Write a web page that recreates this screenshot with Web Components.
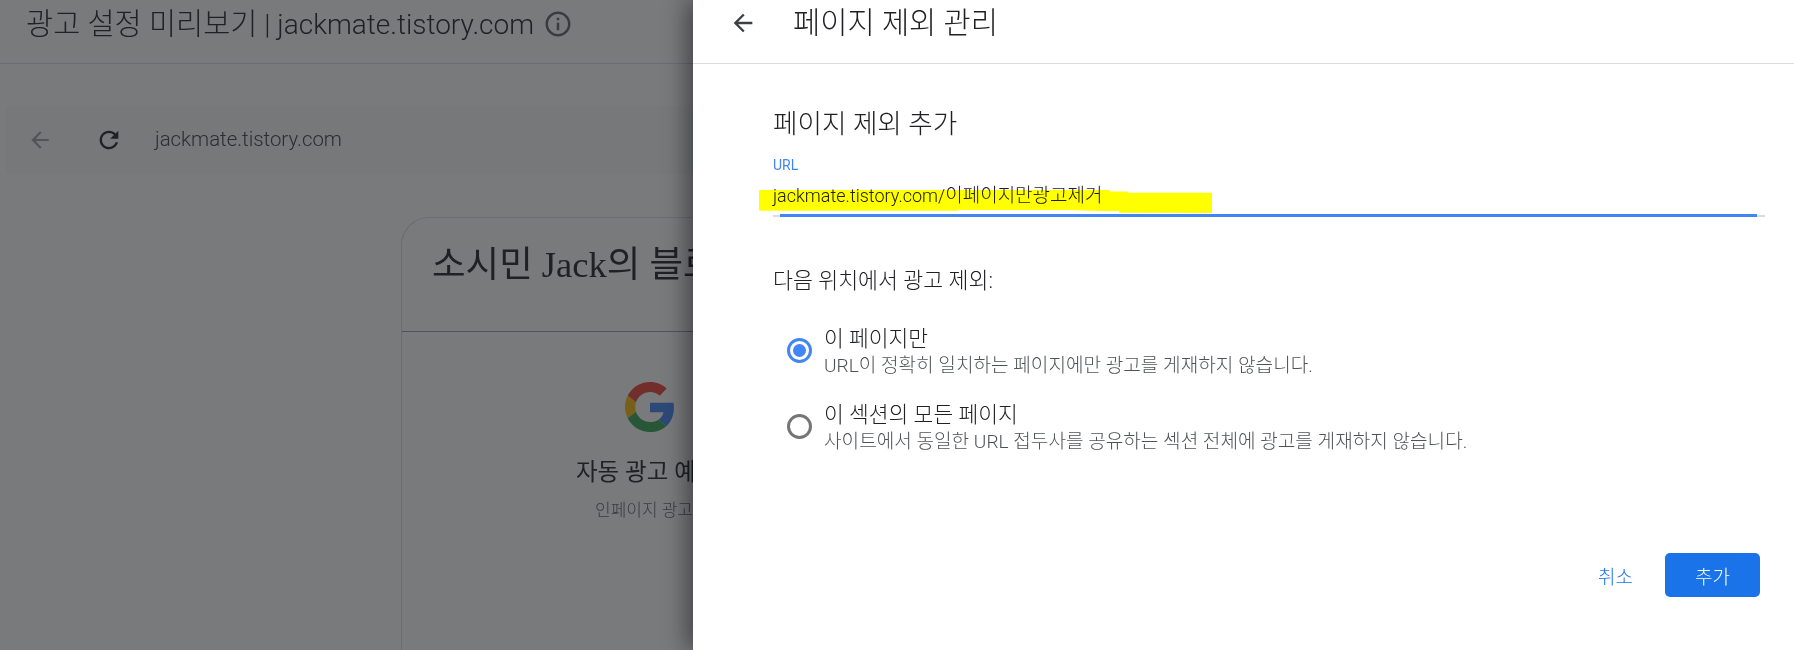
<!DOCTYPE html>
<html lang="ko">
<head>
<meta charset="utf-8">
<title>페이지 제외 관리</title>
<style>
  html, body { margin: 0; height: 100%; overflow: hidden; background: #fff; }
  body {
    font-family: Roboto, "Noto Sans CJK KR", sans-serif;
    color: #202124;
  }
  ads-layout { height: 650px; }
</style>
</head>
<body>
<ads-layout>
  <preview-pane slot="preview" site="jackmate.tistory.com" blog="소시민 Jack의 블로그"></preview-pane>
  <exclusion-panel slot="panel"></exclusion-panel>
</ads-layout>

<script>
const ICONS = {
  back: "M20 11H7.83l5.59-5.59L12 4l-8 8 8 8 1.41-1.41L7.83 13H20v-2z",
  refresh: "M17.65 6.35C16.2 4.9 14.21 4 12 4c-4.42 0-7.99 3.58-7.99 8s3.57 8 7.99 8c3.73 0 6.84-2.55 7.73-6h-2.08c-.82 2.33-3.04 4-5.65 4-3.31 0-6-2.69-6-6s2.69-6 6-6c1.66 0 3.14.69 4.22 1.78L13 11h7V4l-2.35 2.35z",
  info: "M11 7h2v2h-2zm0 4h2v6h-2zm1-9C6.48 2 2 6.48 2 12s4.48 10 10 10 10-4.48 10-10S17.52 2 12 2zm0 18c-4.41 0-8-3.59-8-8s3.59-8 8-8 8 3.59 8 8-3.59 8-8 8z"
};

class MatIcon extends HTMLElement {
  connectedCallback() {
    const size = this.getAttribute("size") || 24;
    const root = this.shadowRoot || this.attachShadow({ mode: "open" });
    root.innerHTML = `
      <style>
        :host { display: inline-flex; flex: none; color: inherit; }
        svg { display: block; fill: currentColor; }
      </style>
      <svg width="${size}" height="${size}" viewBox="0 0 24 24"><path d="${ICONS[this.getAttribute("name")]}"/></svg>`;
  }
}
customElements.define("mat-icon", MatIcon);

class AdsLayout extends HTMLElement {
  constructor() {
    super();
    this.attachShadow({ mode: "open" }).innerHTML = `
      <style>
        :host { display: flex; width: 100%; overflow: hidden; }
        ::slotted([slot="preview"]) { flex: 0 0 693px; }
        ::slotted([slot="panel"]) { flex: 1; min-width: 0; }
      </style>
      <slot name="preview"></slot>
      <slot name="panel"></slot>`;
  }
}
customElements.define("ads-layout", AdsLayout);

class PreviewPane extends HTMLElement {
  connectedCallback() {
    const site = this.getAttribute("site");
    const blog = this.getAttribute("blog");
    this.attachShadow({ mode: "open" }).innerHTML = `
      <style>
        :host { display: block; position: relative; overflow: hidden; background: #fff; height: 650px; }
        .scrim { position: absolute; inset: 0; background: rgba(32,33,36,.6); }
        header {
          box-sizing: border-box; height: 64px; padding: 6px 0 0 26px;
          display: flex; align-items: flex-start; gap: 9px;
          border-bottom: 1px solid #dadce0;
          font-size: 28px; line-height: 36px; white-space: nowrap; font-weight: 300;
        }
        header .ko { font-size: 29.5px; }
        header mat-icon { color: #5f6368; margin-top: 3px; }
        .bar {
          margin: 41px 0 0 5px; height: 69px; border-radius: 8px 0 0 8px;
          background: #f8f9fa; display: flex; align-items: center;
          padding-left: 22px; color: #3c4043;
        }
        .bar .back { color: #9aa0a6; margin-right: 42px; }
        .bar .refresh { color: #202124; margin-right: 32px; }
        .bar span { font-size: 20.4px; font-weight: 300; margin-top: -2px; }
        .card {
          margin: 43px 0 0 401px; width: 500px; height: 500px;
          border: 1px solid #dadce0; border-radius: 28px 0 0 0; border-right: 0;
        }
        .card h2 {
          margin: 0; box-sizing: border-box; height: 114px; padding: 22px 0 0 30px;
          font: 400 36.5px/50px "Liberation Serif", "Noto Sans CJK KR", serif;
          white-space: nowrap; border-bottom: 1px solid #9aa0a6;
        }
        .body { position: relative; }
        .logo { display: block; margin: 50px 0 0 223px; }
        .body h3 { margin: 24px 0 0 174px; font-size: 23.5px; font-weight: 400; line-height: 32px; white-space: nowrap; }
        .body p { margin: 10px 0 0 193px; font-size: 17px; font-weight: 300; line-height: 24px; color: #5f6368; white-space: nowrap; }
      </style>
      <header><span><span class="ko">광고 설정 미리보기</span> | ${site}</span><mat-icon name="info" size="30"></mat-icon></header>
      <div class="bar">
        <mat-icon class="back" name="back" size="26"></mat-icon>
        <mat-icon class="refresh" name="refresh" size="28"></mat-icon>
        <span>${site}</span>
      </div>
      <div class="card">
        <h2>${blog}</h2>
        <div class="body">
          <svg class="logo" width="50" height="50" viewBox="0 0 48 48">
            <path fill="#EA4335" d="M24 9.5c3.54 0 6.71 1.22 9.21 3.6l6.85-6.85C35.9 2.38 30.47 0 24 0 14.62 0 6.51 5.38 2.56 13.22l7.98 6.19C12.43 13.72 17.74 9.5 24 9.5z"/>
            <path fill="#4285F4" d="M46.98 24.55c0-1.57-.15-3.09-.38-4.55H24v9.02h12.94c-.58 2.96-2.26 5.48-4.78 7.18l7.73 6c4.51-4.18 7.09-10.36 7.09-17.65z"/>
            <path fill="#FBBC05" d="M10.53 28.59c-.48-1.45-.76-2.99-.76-4.59s.27-3.14.76-4.59l-7.98-6.19C.92 16.46 0 20.12 0 24c0 3.88.92 7.54 2.56 10.78l7.97-6.19z"/>
            <path fill="#34A853" d="M24 48c6.48 0 11.93-2.13 15.89-5.81l-7.73-6c-2.15 1.45-4.92 2.3-8.16 2.3-6.26 0-11.57-4.22-13.47-9.91l-7.98 6.19C6.51 42.62 14.62 48 24 48z"/>
          </svg>
          <h3>자동 광고 예시</h3>
          <p>인페이지 광고</p>
        </div>
      </div>
      <div class="scrim"></div>`;
  }
}
customElements.define("preview-pane", PreviewPane);

class RadioOption extends HTMLElement {
  constructor() {
    super();
    this.attachShadow({ mode: "open" }).innerHTML = `
      <style>
        :host { display: flex; align-items: center; gap: 12px; }
        .dot {
          box-sizing: border-box; width: 25px; height: 25px; flex: none; border-radius: 50%; margin-bottom: 4px;
          border: 3px solid #757575; display: flex; align-items: center; justify-content: center;
        }
        :host([checked]) .dot { border-color: #4285f4; }
        :host([checked]) .dot::after { content: ""; width: 13px; height: 13px; border-radius: 50%; background: #4285f4; }
        .label { font-size: 21.5px; line-height: 28px; color: #202124; font-weight: 300; white-space: nowrap; }
        .hint { font-size: 19.1px; line-height: 26px; color: #4f5357; font-weight: 300; white-space: nowrap; }
      </style>
      <span class="dot"></span>
      <div>
        <div class="label"><slot name="label"></slot></div>
        <div class="hint"><slot name="hint"></slot></div>
      </div>`;
  }
}
customElements.define("radio-option", RadioOption);

class UrlField extends HTMLElement {
  connectedCallback() {
    const [host, path] = this.getAttribute("value").split("/");
    this.attachShadow({ mode: "open" }).innerHTML = `
      <style>
        :host { display: block; position: relative; }
        label { display: block; font-size: 14px; line-height: 20px; color: #4285f4; }
        .value { font-size: 18px; line-height: 28px; margin-top: 7px; height: 33px; font-weight: 300; color: #202124; }
        .value span { font-size: 19px; }
        .track { height: 2px; background: #dadce0; position: relative; margin-right: 29px; }
        .track::after { content: ""; position: absolute; left: 7px; right: 8px; top: -1px; height: 3px; background: #4285f4; }
        .marker { position: absolute; left: -14px; top: 33px; mix-blend-mode: multiply; pointer-events: none; }
      </style>
      <label>URL</label>
      <div class="value">${host}/<span>${path}</span></div>
      <div class="track"></div>
      <svg class="marker" width="460" height="30" viewBox="0 0 460 30">
        <polygon fill="#ffff00" points="0,2 351,2 351,3.5 369,3.5 369,4.7 453,4.7 453,25 360,24.7 360,23 342,23 310,22 199,22 199,22.7 0,22.7"/>
      </svg>`;
  }
}
customElements.define("url-field", UrlField);

class ExclusionPanel extends HTMLElement {
  constructor() {
    super();
    this.attachShadow({ mode: "open" }).innerHTML = `
      <style>
        :host {
          display: block; position: relative; height: 650px; background: #fff;
          box-shadow: -6px 0 22px rgba(0,0,0,.45);
        }
        header {
          box-sizing: border-box; height: 64px; padding: 0 0 0 36px;
          display: flex; gap: 36px; border-bottom: 1px solid #dadce0;
          font-size: 29.6px; line-height: 46px; font-weight: 300; white-space: nowrap;
        }
        header mat-icon { color: #3c4043; margin-top: 9px; }
        main { padding: 42px 0 0 80px; }
        h2 { margin: 0; font-size: 26.6px; line-height: 36px; font-weight: 300; }
        url-field { margin-top: 13px; }
        h3 { margin: 50px 0 0; font-size: 21.7px; line-height: 28px; font-weight: 300; }
        .options { display: flex; flex-direction: column; gap: 22px; margin: 30px 0 0 14px; }
        footer { display: flex; justify-content: flex-end; align-items: center; gap: 32px; padding-right: 34px; margin-top: 98px; }
        .cancel { color: #1a73e8; font-size: 19px; font-weight: 300; }
        button {
          width: 95px; height: 44px; border: 0; border-radius: 5px; background: #1a73e8;
          color: #fff; font: 300 19px Roboto, "Noto Sans CJK KR", sans-serif;
        }
      </style>
      <header><mat-icon name="back" size="28"></mat-icon><span>페이지 제외 관리</span></header>
      <main>
        <h2>페이지 제외 추가</h2>
        <url-field value="jackmate.tistory.com/이페이지만광고제거"></url-field>
        <h3>다음 위치에서 광고 제외:</h3>
        <div class="options">
          <radio-option checked><span slot="label">이 페이지만</span><span slot="hint">URL이 정확히 일치하는 페이지에만 광고를 게재하지 않습니다.</span></radio-option>
          <radio-option><span slot="label">이 섹션의 모든 페이지</span><span slot="hint">사이트에서 동일한 URL 접두사를 공유하는 섹션 전체에 광고를 게재하지 않습니다.</span></radio-option>
        </div>
      </main>
      <footer><span class="cancel">취소</span><button>추가</button></footer>`;
  }
}
customElements.define("exclusion-panel", ExclusionPanel);
</script>
</body>
</html>
